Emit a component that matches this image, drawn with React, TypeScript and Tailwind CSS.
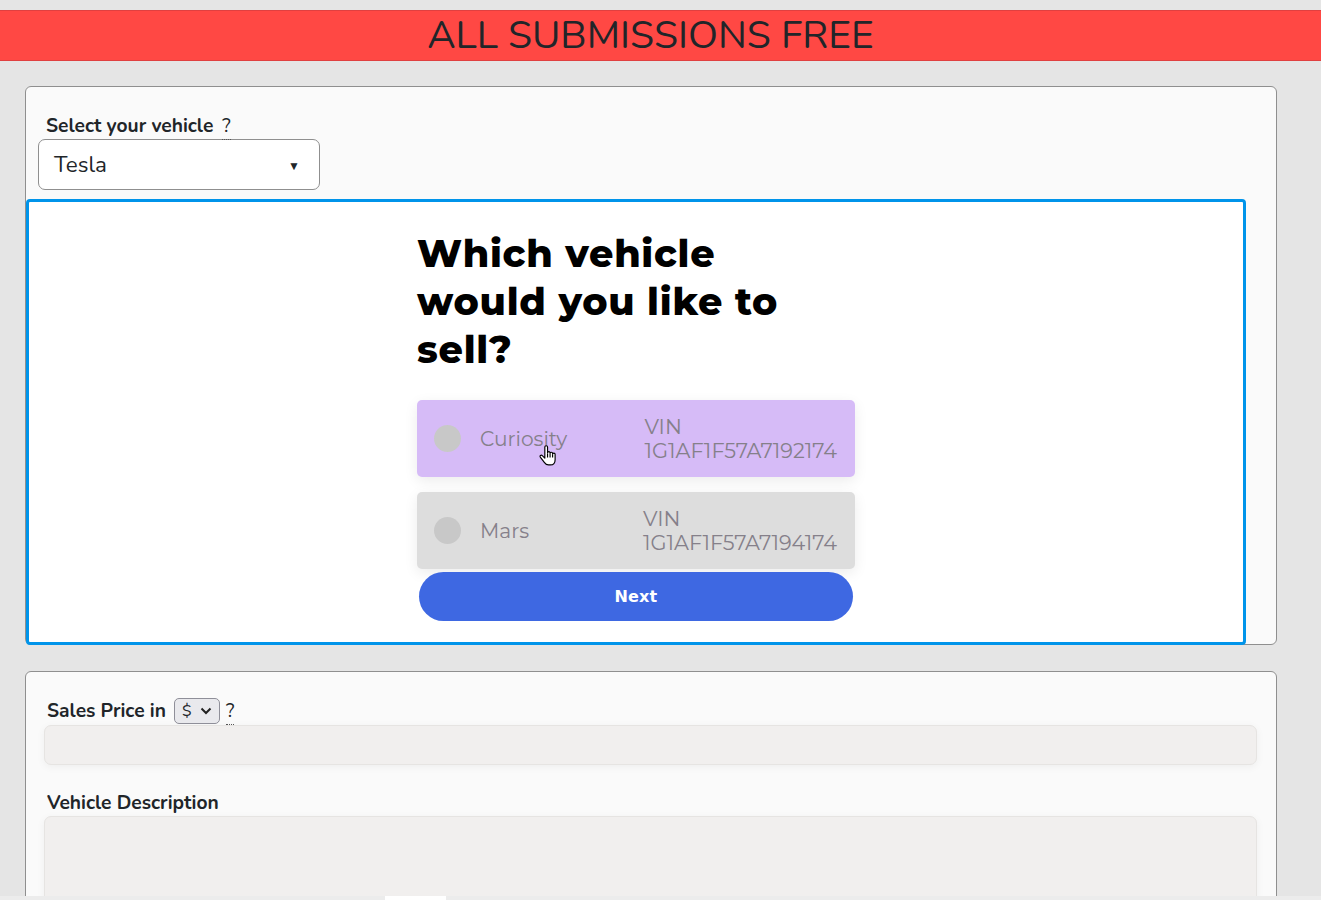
const vehicles = [
  { name: 'Curiosity', vin: '1G1AF1F57A7192174', bg: 'bg-[#d6bbf7]' },
  { name: 'Mars', vin: '1G1AF1F57A7194174', bg: 'bg-[#dddddd]' },
];

function Help() {
  return <span className="border-b border-dotted border-[#555] text-[19px] leading-[19px]">?</span>;
}

export default function App() {
  return (
    <div className="relative h-[900px] overflow-hidden bg-[#e5e5e5] pt-[10px] font-['Nunito','Noto_Sans',sans-serif] text-[#212529]">
      {/* Banner */}
      <div className="flex h-[51px] items-center justify-center border-y border-[#e04040] bg-[#ff4844] pt-[2px] text-[39px] text-[#212529]">
        <span className="ml-[-20px]">ALL SUBMISSIONS FREE</span>
      </div>

      {/* Vehicle card */}
      <div className="mt-[25px] ml-[25px] h-[559px] w-[1252px] rounded-[6px] border border-[#8f8f8f] bg-[#fafafa] pt-[27px]">
        <div className="ml-[20px] flex h-[24px] items-center gap-[9px] text-[19.2px] font-bold">
          <span>Select your vehicle</span>
          <span className="font-normal"><Help /></span>
        </div>
        <div className="ml-[12px] mt-[1px] flex h-[51px] w-[282px] items-center justify-between rounded-[7px] border border-[#8f8f8f] bg-white pl-[15px] pr-[19px] pt-[1px] text-[22.4px]">
          <span>Tesla</span>
          <span className="mt-[2px] text-[12px]">▼</span>
        </div>

        {/* Embedded widget */}
        <div className="mt-[9px] flex h-[446px] w-[1220px] flex-col items-center rounded-[4px] border-[3px] border-[#0094ea] bg-white">
          <div className="w-[438px] pt-[28px]">
            <h1 className="w-[380px] font-['Montserrat','Inter',sans-serif] text-[38px] font-extrabold leading-[48px] tracking-[0.02em] text-black">
              Which vehicle would you like to sell?
            </h1>
            <div className="mt-[26px] flex flex-col gap-[15px] font-['Montserrat','Lato',sans-serif] text-[#85808a]">
              {vehicles.map(v => (
                <div key={v.name} className={`flex h-[77px] items-center rounded-[5px] pl-[17px] pr-[18px] shadow-[0_4px_14px_rgba(0,0,0,0.08)] ${v.bg}`}>
                  <span className="h-[27px] w-[27px] shrink-0 rounded-full bg-[#c8c8c8]" />
                  <span className="ml-[19px] pt-[1px] text-[20.2px]">{v.name}</span>
                  <span className="ml-auto text-[20.8px] leading-[24px]">VIN<br />{v.vin}</span>
                </div>
              ))}
            </div>
            <button className="relative mx-auto mt-[3px] block h-[49px] w-[434px] rounded-[25px] bg-[#3e68e2] pt-[1px] font-['DejaVu_Sans',sans-serif] text-[16px] font-bold tracking-[0.01em] text-white">
              Next
            </button>
          </div>
        </div>
      </div>

      {/* Price and description card */}
      <div className="mt-[26px] ml-[25px] h-[300px] w-[1252px] rounded-[6px] border border-[#8f8f8f] bg-[#fafafa] pt-[25px] pl-[18px] pr-[19px]">
        <div className="ml-[3px] flex h-[28px] items-center text-[19.2px] font-bold">
          <span>Sales Price in</span>
          <span className="ml-[8px] flex h-[26px] w-[46px] items-center justify-between rounded-[5px] border border-[#8f8f99] bg-[#e9e9ed] px-[7px] text-[16px] font-normal">
            $
            <svg width="12" height="8" viewBox="0 0 12 8" fill="none" stroke="#222" strokeWidth="2"><path d="M1.5 1.5 6 6l4.5-4.5" /></svg>
          </span>
          <span className="ml-[6px] font-normal"><Help /></span>
        </div>
        <div className="h-[40px] rounded-[7px] border border-[#e6e4e2] bg-[#f1efee] shadow-[0_2px_8px_rgba(0,0,0,0.05)]" />
        <div className="ml-[3px] mt-[24px] h-[27px] text-[19.2px] font-bold">Vehicle Description</div>
        <div className="h-[120px] rounded-[7px] border border-[#e6e4e2] bg-[#f1efee] shadow-[0_2px_8px_rgba(0,0,0,0.05)]" />
      </div>

      {/* Cursor */}
      <svg className="absolute left-[539px] top-[445px]" width="19" height="21" viewBox="0 0 18 20" fill="#fff" stroke="#000" strokeWidth="1.1" strokeLinejoin="round">
        <path d="M5.5 10V2a1.3 1.3 0 0 1 2.6 0v5.5a1.2 1.2 0 0 1 2.4 0v.6a1.2 1.2 0 0 1 2.4 0v.8a1.2 1.2 0 0 1 2.4 0V14c0 3-1.6 5-4.5 5H9c-2 0-3-1-4-2.5l-3.8-5c-.8-1.2.8-2.4 1.9-1.4l2.4 2.4Z" />
        <path d="M8.1 8v4M10.5 8.5V12M12.9 9.2V12" fill="none" />
      </svg>

      {/* Bottom strip */}
      <div className="absolute bottom-0 left-0 h-[4px] w-full bg-[#ececec]">
        <div className="ml-[385px] h-full w-[61px] bg-white" />
      </div>
    </div>
  );
}
